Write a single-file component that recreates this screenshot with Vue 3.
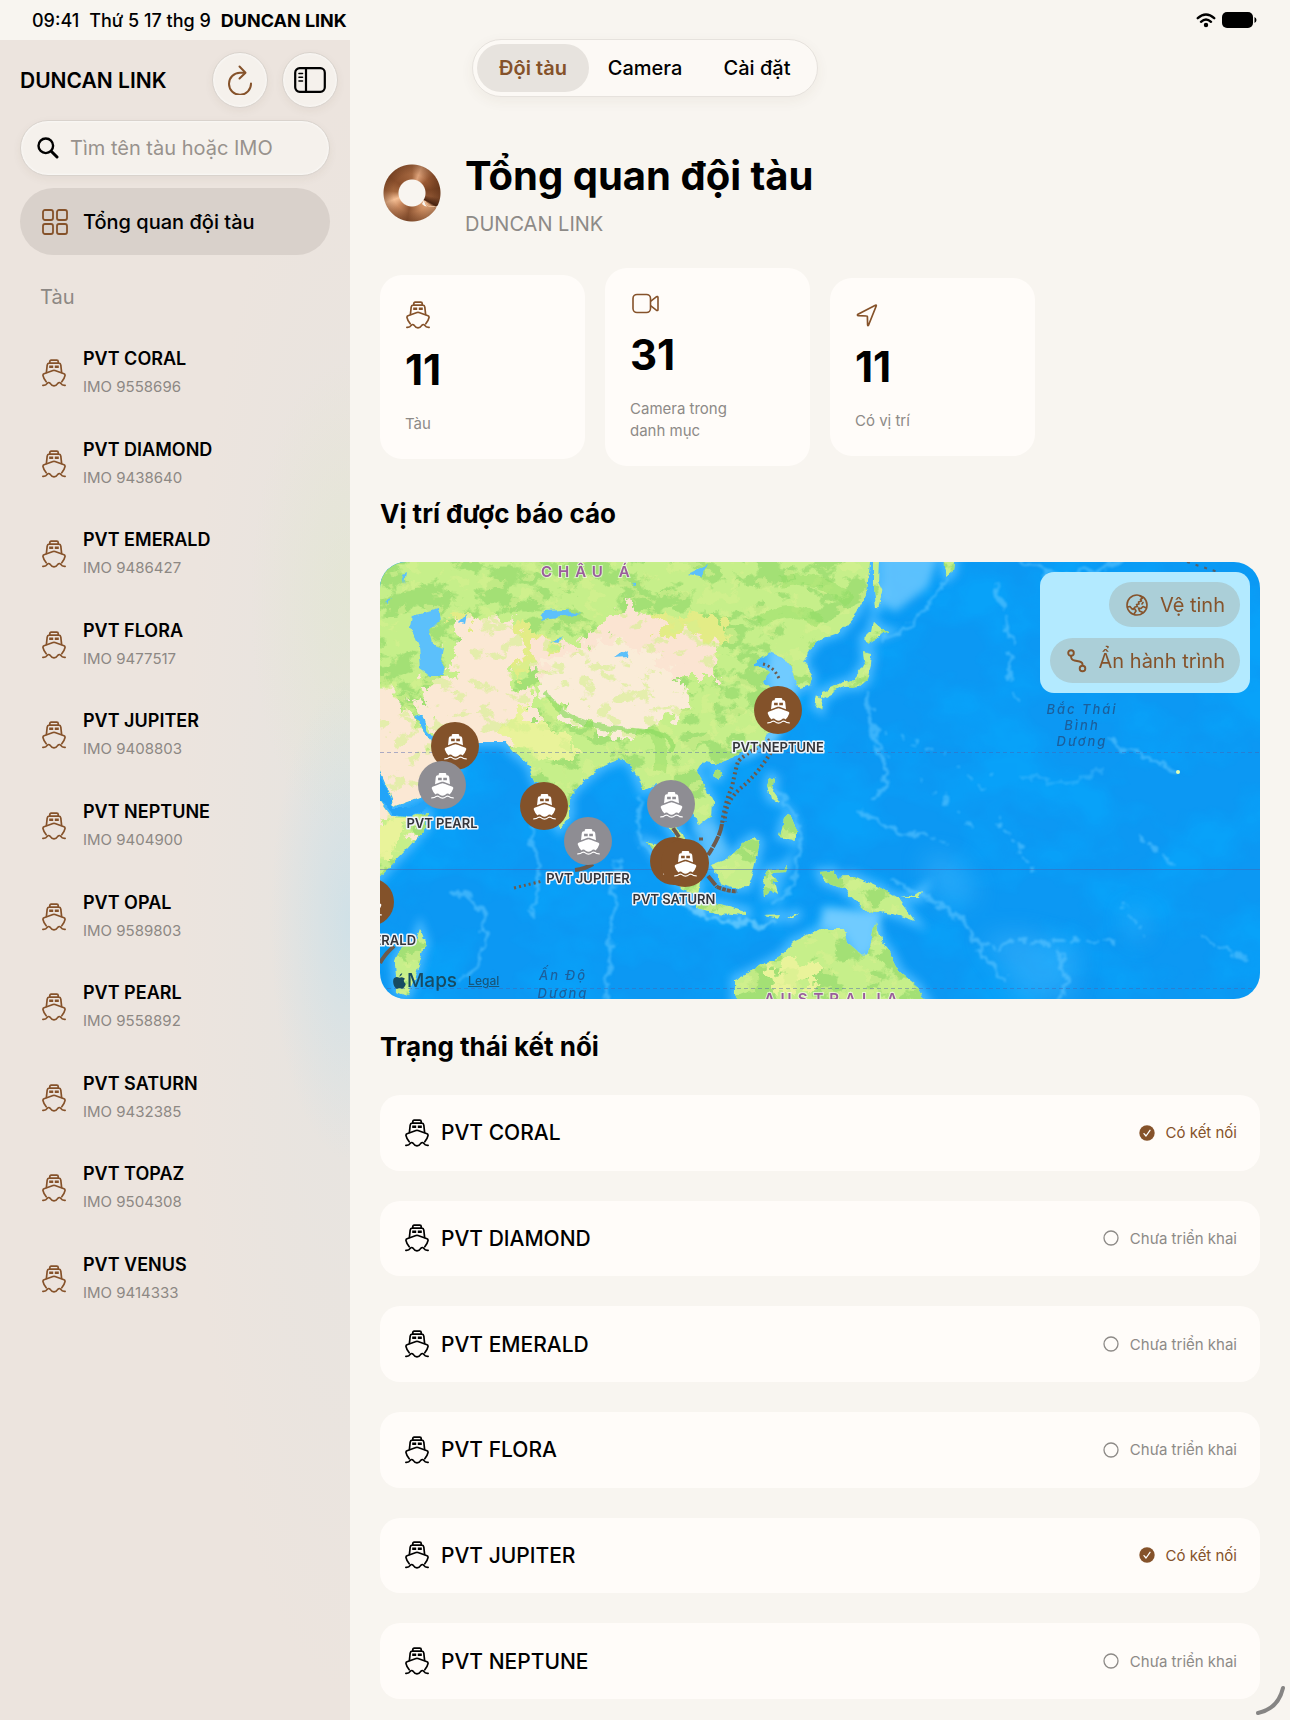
<script setup>
import { ref } from 'vue'

const ships = [
  { name: 'PVT CORAL', imo: '9558696', online: true },
  { name: 'PVT DIAMOND', imo: '9438640', online: false },
  { name: 'PVT EMERALD', imo: '9486427', online: false },
  { name: 'PVT FLORA', imo: '9477517', online: false },
  { name: 'PVT JUPITER', imo: '9408803', online: true },
  { name: 'PVT NEPTUNE', imo: '9404900', online: false },
  { name: 'PVT OPAL', imo: '9589803' },
  { name: 'PVT PEARL', imo: '9558892' },
  { name: 'PVT SATURN', imo: '9432385' },
  { name: 'PVT TOPAZ', imo: '9504308' },
  { name: 'PVT VENUS', imo: '9414333' },
]
const statusRows = ships.slice(0, 6)

const stats = [
  { icon: 'ship', value: 11, label: 'Tàu' },
  { icon: 'camera', value: 31, label: 'Camera trong danh mục' },
  { icon: 'arrow', value: 11, label: 'Có vị trí' },
]

const tabs = ['Đội tàu', 'Camera', 'Cài đặt']
const activeTab = ref('Đội tàu')
const query = ref('')

const pins = [
  { x: 398, y: 148, label: 'PVT NEPTUNE', dy: 42 },
  { x: 75, y: 184 },
  { x: 62, y: 223, grey: true, label: 'PVT PEARL', dy: 43 },
  { x: 164, y: 244 },
  { x: 208, y: 279, grey: true, label: 'PVT JUPITER', dy: 42 },
  { x: 291, y: 242, grey: true },
  { x: 294, y: 299, label: 'PVT SATURN', dy: 43 },
  { x: 305, y: 301 },
  { x: -10, y: 340, label: 'PVT EMERALD', dy: 43 },
]

// Outlines of the land masses in map units, one sub-path list per region
const coast = [
  'M-20-20H490V0L487 30L477 50L460 70L440 77L433 84L423 100L432 114L430 124L420 127L418 120L412 107L403 95L390 90L373 102L390 110L383 120L390 127L396 150L390 170L377 184L357 194L337 202L323 200L317 210L323 220L333 240L332 254L318 265L315 254L307 240L296 244L298 270L310 282L320 302L303 288L290 267L283 254L277 222L263 229L258 217L250 200L240 197L223 204L203 220L190 234L190 254L180 267L167 250L157 222L153 214L150 204L140 195L133 190L125 180L100 180L77 180L60 184L47 168L42 152L35 154L45 172L57 186L77 207L70 218L53 227L40 235L13 245L12 236L0 208L-20 190Z',
  'M-20 225L0 240L10 254L30 255L48 250L47 264L27 287L0 315L-20 335Z',
  'M40 367L45 380L37 410L27 434L17 430L15 400L20 387L35 380Z',
  'M493-20H500L498 20L503 30L498 47L495 47L493 25ZM563-20H576L573 10L567 15L564 5Z',
  'M493 59L502 67L510 70L500 74L487 82L483 77L491 69ZM484 89L492 91L491 102L487 118L480 124L463 125L447 134L442 136L442 130L460 122L472 118L480 108L485 100ZM437 134L443 137L441 148L435 144Z',
  'M390 215L395 217L393 230L400 240L390 236L387 224ZM404 258L410 252L415 264L415 280L408 276L400 274ZM337 208L342 210L338 216L333 213Z',
  'M373 275L380 280L377 294L374 306L367 325L352 326L340 322L332 303L345 298L353 292L362 283Z',
  'M267 280L280 284L300 300L320 320L318 335L303 327L283 305Z',
  'M317 340L340 342L367 349L367 353L337 351L317 346ZM385 354L400 353L398 357ZM405 357L420 350L414 356Z',
  'M384 315L388 308L403 306L407 302L405 310L392 311L398 320L393 320L396 334L390 330L386 333Z',
  'M440 310L453 309L457 315L473 314L500 326L520 338L535 359L513 351L500 349L490 352L477 340L463 327L443 319ZM520 336L534 334L543 328L540 336Z',
  'M355 460V417L380 405L400 394L413 380L430 372L440 367L463 367L467 380L483 394L490 387L495 360L502 380L510 390L520 410L537 424L550 445V460Z',
].join('')
</script>

<template>
  <div class="screen">
    <svg class="defs" aria-hidden="true">
      <symbol id="i-ship" viewBox="0 0 24 28">
        <g fill="none" stroke="currentColor" stroke-width="1.7" stroke-linecap="round" stroke-linejoin="round">
          <path d="M7.8 4V2.6Q7.8 1.2 9.2 1.2H14.8Q16.2 1.2 16.2 2.6V4" />
          <path d="M4.4 13.4L5.2 6Q5.4 4.2 7.2 4.2H16.8Q18.6 4.2 18.8 6L19.6 13.4" />
          <path d="M4.2 22.8Q1.6 19.5 1 16.6Q.8 15.3 2 14.8L11 11.5Q12 11.2 13 11.5L22 14.8Q23.2 15.3 23 16.6Q22.4 19.5 19.8 22.8" />
          <path d="M.9 26.4Q4 26.6 5.2 24.4Q6.6 22.6 8.2 24.4Q9.6 26.8 12 26.8T15.8 24.4Q17.4 22.6 18.8 24.4Q20 26.6 23.1 26.4" />
        </g>
        <path fill="currentColor" d="M7.2 6.6H11.2V9H7.2ZM12.8 6.6H16.8V9H12.8Z" />
      </symbol>
      <symbol id="i-pin" viewBox="0 0 24 28">
        <path fill="#fff" fill-rule="evenodd" d="M8 2.5Q8 1 9.4 1H14.6Q16 1 16 2.5V3.4H17Q18.8 3.4 19 5.2L19.8 12.6L13 10.2Q12 9.9 11 10.2L4.2 12.6L5 5.2Q5.2 3.4 7 3.4H8ZM7.4 6V8.4H11.2V6ZM12.8 6V8.4H16.6V6Z" />
        <path fill="#fff" d="M12 11.6Q12.6 11.6 22.4 15.2Q23.6 15.8 23.2 17Q22 20.6 19.4 23.4Q17.4 21.4 15 23.6Q12 26 9 23.6Q6.6 21.4 4.6 23.4Q2 20.6.8 17Q.4 15.8 1.6 15.2Q11.4 11.6 12 11.6Z" />
        <path fill="none" stroke="#fff" stroke-width="1.3" stroke-linecap="round" d="M.8 27Q4 27 5.4 25.4Q6.8 24.6 8.2 25.6Q12 28.6 15.8 25.6Q17.2 24.6 18.6 25.4Q20 27 23.2 27" />
      </symbol>
    </svg>

    <header class="statusbar">
      <span>09:41</span>
      <span>Thứ 5 17 thg 9</span>
      <strong>DUNCAN LINK</strong>
      <svg class="wifi" width="20" height="15" viewBox="0 0 20 15" fill="none" stroke="#000" stroke-width="2.4" stroke-linecap="round">
        <path d="M1.8 5.2Q10-2.2 18.2 5.2M5 8.8Q10 4.3 15 8.8" />
        <circle cx="10" cy="12" r="1.4" fill="#000" stroke-width="1.6" />
      </svg>
      <svg width="35" height="16" viewBox="0 0 35 16"><rect x="0" y="0" width="31" height="16" rx="5" /><path d="M32.5 5Q34.5 6 34.5 8T32.5 11Z" /></svg>
    </header>

    <div class="body">
      <aside class="sidebar">
        <div class="side-head">
          <h2>DUNCAN LINK</h2>
          <button class="round bronze" aria-label="Làm mới">
            <svg width="26" height="30" viewBox="0 0 26 30" fill="none" stroke="currentColor" stroke-width="2" stroke-linecap="round" stroke-linejoin="round">
              <path d="M17.5 7.8H13A11 11 0 1 0 24 18.5" /><path d="M12.5 1.5L18.5 7.7L12.5 13.5" />
            </svg>
          </button>
          <button class="round" aria-label="Thanh bên">
            <svg width="32" height="26" viewBox="0 0 32 26" fill="none" stroke="currentColor" stroke-width="2.2" stroke-linecap="round">
              <rect x="1.2" y="1.2" width="29.6" height="23.6" rx="4.5" /><path d="M12 1.5V24.5" /><path stroke-width="1.6" d="M5 6.5H8.5M5 10.2H8.5M5 14H8.5" />
            </svg>
          </button>
        </div>

        <label class="search">
          <svg width="22" height="22" viewBox="0 0 22 22" fill="none" stroke="#000" stroke-linecap="round"><circle cx="8.8" cy="8.8" r="7.3" stroke-width="2.4" /><path stroke-width="3" d="M14.5 14.5L20 20" /></svg>
          <input v-model="query" type="text" placeholder="Tìm tên tàu hoặc IMO" aria-label="Tìm tên tàu hoặc IMO" />
        </label>

        <button class="overview">
          <svg width="26" height="26" viewBox="0 0 26 26" fill="none" stroke="currentColor" stroke-width="1.8"><rect x="1" y="1" width="10" height="10" rx="2" /><rect x="15" y="1" width="10" height="10" rx="2" /><rect x="1" y="15" width="10" height="10" rx="2" /><rect x="15" y="15" width="10" height="10" rx="2" /></svg>
          Tổng quan đội tàu
        </button>

        <h3>Tàu</h3>
        <ul class="ships">
          <li v-for="s in ships" :key="s.imo">
            <svg class="ship bronze"><use href="#i-ship" /></svg>
            <div>
              <div class="ship-name">{{ s.name }}</div>
              <div class="ship-imo">IMO {{ s.imo }}</div>
            </div>
          </li>
        </ul>
      </aside>

      <main class="main">
        <nav class="tabs">
          <button v-for="t in tabs" :key="t" :class="{ active: t === activeTab }" @click="activeTab = t">{{ t }}</button>
        </nav>

        <div class="hero">
          <div class="logo">
            <svg width="60" height="60" viewBox="0 0 60 60">
              <path fill="none" stroke="#e9bd98" stroke-width="1" d="M43.5 38Q44 43.500 48 43.500H52Q54.500 43.500 56 46" />
              <path fill="#f8f5f0" d="M42 37Q43 42 45 43.500Q42.500 43.500 40 41ZM54 43.500L60 41V46L56 47Q55.800 44.500 54 43.500Z" />
            </svg>
          </div>
          <div>
            <h1>Tổng quan đội tàu</h1>
            <p>DUNCAN LINK</p>
          </div>
        </div>

        <section class="stats">
          <article v-for="s in stats" :key="s.label">
            <svg v-if="s.icon === 'ship'" class="stat-ship bronze"><use href="#i-ship" /></svg>
            <svg v-else-if="s.icon === 'camera'" class="bronze" width="30" height="24" viewBox="0 0 30 24" fill="none" stroke="currentColor" stroke-width="1.6" stroke-linejoin="round"><rect x="3" y="2.500" width="17.500" height="18" rx="4" /><path d="M20.500 9.300L26.300 4.800Q28 3.800 28 5.600V17.400Q28 19.200 26.300 18.200L20.500 13.700" /></svg>
            <svg v-else class="bronze" width="24" height="26" viewBox="0 0 24 26" fill="none" stroke="currentColor" stroke-width="1.7" stroke-linejoin="round"><path d="M3 12.300L20.400 3.200Q21.600 2.800 21.200 4L13.600 23Q12.800 24.300 12.600 22.800L12.400 14.600Q12.300 14 11.600 14L3.200 13.600Q1.800 13.200 3 12.300Z" /></svg>
            <div class="value">{{ s.value }}</div>
            <div class="caption">{{ s.label }}</div>
          </article>
        </section>

        <h2 class="section-title">Vị trí được báo cáo</h2>

        <div class="map">
          <svg class="canvas" viewBox="0 0 880 437" preserveAspectRatio="xMidYMid slice">
            <defs>
              <filter id="rough" x="-5%" y="-5%" width="110%" height="110%">
                <feTurbulence type="fractalNoise" baseFrequency=".09" numOctaves="3" seed="4" result="n" />
                <feDisplacementMap in="SourceGraphic" in2="n" scale="7" xChannelSelector="R" yChannelSelector="G" />
              </filter>
              <filter id="ragged" x="-10%" y="-10%" width="120%" height="120%">
                <feTurbulence type="fractalNoise" baseFrequency=".06" numOctaves="4" seed="9" result="n" />
                <feDisplacementMap in="SourceGraphic" in2="n" scale="36" xChannelSelector="R" yChannelSelector="G" />
              </filter>
              <filter id="soft" x="-20%" y="-20%" width="140%" height="140%"><feGaussianBlur stdDeviation="4" /></filter>
              <filter id="softer" x="-40%" y="-40%" width="180%" height="180%"><feGaussianBlur stdDeviation="12" /></filter>
              <filter id="reef" x="-20%" y="-20%" width="140%" height="140%">
                <feTurbulence type="fractalNoise" baseFrequency=".08" numOctaves="3" seed="2" result="n" />
                <feDisplacementMap in="SourceGraphic" in2="n" scale="18" xChannelSelector="R" yChannelSelector="G" /><feGaussianBlur stdDeviation="1.2" />
              </filter>
              <filter id="forest" x="0" y="0" width="100%" height="100%" color-interpolation-filters="sRGB">
                <feTurbulence type="fractalNoise" baseFrequency=".03 .04" numOctaves="5" seed="11" />
                <feColorMatrix values="0 0 0 0 .64  0 0 0 0 .88  0 0 0 0 .46  16 0 0 0 -8" />
              </filter>
              <filter id="meadow" x="0" y="0" width="100%" height="100%" color-interpolation-filters="sRGB">
                <feTurbulence type="fractalNoise" baseFrequency=".05 .07" numOctaves="5" seed="23" />
                <feColorMatrix values="0 0 0 0 .84  0 0 0 0 .94  0 0 0 0 .56  0 16 0 0 -9.4" />
              </filter>
              <filter id="depth" x="0" y="0" width="100%" height="100%" color-interpolation-filters="sRGB">
                <feTurbulence type="fractalNoise" baseFrequency=".012 .016" numOctaves="4" seed="7" />
                <feColorMatrix values="0 0 0 0 .02  0 0 0 0 .67  0 0 0 0 1  3 0 0 0 -1.2" />
              </filter>
              <clipPath id="land-clip"><path :d="coast" /></clipPath>
            </defs>

            <rect width="880" height="437" fill="#0c98f3" />
            <rect width="880" height="437" filter="url(#depth)" opacity=".5" />
            <path :d="coast" filter="url(#soft)" fill="#45b8ff" stroke="#45b8ff" stroke-width="9" />
            <g filter="url(#soft)" fill="#6fcbff">
              <path d="M390 85L425 95L412 150L395 180L360 200L395 160L385 110Z" />
              <path d="M443 345L500 350L496 385L480 400L462 372L440 366Z" />
              <path d="M500-10H560L548 25L515 50L500 40Z" opacity=".8" />
              <path d="M315 262L335 258L350 290L325 310Z" opacity=".8" />
            </g>
            <g filter="url(#softer)" fill="#4dbcff" opacity=".4">
              <path d="M545 290L580 300L600 335L570 345L545 320Z" /><path d="M600 375L640 370L700 385L690 437H640L620 400Z" /><path d="M745 345L765 350L765 380L750 375Z" />
            </g>
            <g fill="none" stroke="#5cc4ff" stroke-width="4" filter="url(#reef)" stroke-linecap="round" opacity=".6">
              <path d="M150 265Q160 300 158 325T150 350" /><path d="M75 330Q105 335 105 370T80 420" /><path d="M238 300Q230 370 227 437" />
              <path d="M260 240Q250 270 270 290" /><path d="M568 15Q540 60 505 78" /><path d="M615 25Q632 60 630 90T640 140" stroke-dasharray="22 14" /><path d="M640 0Q690 25 740 0" />
              <path d="M485 130Q495 180 505 200T495 235" /><path d="M480 250L520 270L545 275" /><path d="M730 180L760 192L797 208" /><path d="M640 215Q700 225 725 205" opacity=".6" />
              <path d="M510 320Q570 340 590 370T625 420" /><path d="M615 260L640 285L655 315" stroke-dasharray="3 9" /><path d="M760 275L790 300" stroke-dasharray="8 8" /><path d="M680 440Q690 410 680 390" />
              <path d="M395 230Q420 240 418 290T390 340" /><path d="M300 340Q340 365 390 362" stroke="#86d8ff" /><path d="M825 375L870 400" stroke-dasharray="12 6" /><path d="M600 385L640 380L730 380" stroke-dasharray="10 8" />
              <path d="M505 170L560 190L600 225L620 205M540 220L580 250L590 265" stroke-width="3" stroke-dasharray="2 14" /><path d="M745 345L765 375M530 270L570 280" stroke-width="3" stroke-dasharray="2 10" />
            </g>
            <circle cx="798" cy="210" r="2" fill="#e6ffb0" />

            <g filter="url(#rough)">
              <path :d="coast" fill="#c6ef8a" />
              <g clip-path="url(#land-clip)">
                <rect x="-20" y="-20" width="600" height="480" filter="url(#forest)" />
                <g filter="url(#ragged)">
                  <path fill="#e3ec86" d="M70 55L130 60L180 80L150 110L90 90ZM255 60L330 50L350 75L300 95L270 95Z" />
                  <path fill="#fbe8d4" d="M70 65L130 50L140 90L125 115L155 130L155 165L125 195L60 195L35 125L75 110Z" />
                  <path fill="#fbe8d4" d="M0 120L25 145L40 165L60 190L90 210L40 250L0 260L-30 200ZM30 275L50 270L40 290Z" />
                  <path fill="#fbe4d2" d="M150 75L200 85L250 40L275 65L335 80L340 115L290 115L260 95L200 120L165 135L155 105Z" />
                  <path fill="#faecd8" d="M165 95L240 80L295 110L310 145L265 170L240 175L190 160L160 130Z" />
                  <path fill="#e9f39a" d="M120 160L145 150L175 165L200 190L165 195L140 190ZM390 405L430 395L440 420L400 430ZM-5 260L30 260L10 290L-10 300Z" />
                </g>
                <rect x="-20" y="-20" width="600" height="480" filter="url(#meadow)" opacity=".6" />
                <path fill="none" stroke="#8fdc62" stroke-width="5" d="M165 130Q185 165 245 168T290 190" opacity=".7" />
                <path fill="none" stroke="#8fdc62" stroke-width="12" d="M270 165Q285 185 280 210M380 60Q410 40 440 60M400 20Q440 10 470 40" opacity=".45" />
              </g>
              <g fill="#5cc0fb">
                <path d="M32 54L58 47L60 57L50 67L53 84L65 87L62 102L63 114L50 114L40 107L38 84L30 65Z" />
                <path d="M160 58L165 50L185 49L200 52L185 55L168 56ZM235 96L248 87L247 95ZM308 12L328 2L322 14ZM78 60L86 52L84 62ZM5 40L12 36L8 42ZM22 12L26 10L24 22ZM172 78L182 76L178 80ZM252 21L256 19V24Z" />
                <path d="M-10 205L0 216Q12 232 12 246L30 246L60 230L66 232L30 256L12 252Q4 238-10 236Z" fill="#20a4f8" />
              </g>
            </g>

            <g fill="none" stroke="#4a5fae" opacity=".45"><path d="M0 307.500H880" /><path stroke-dasharray="4 3" d="M0 190.500H880M0 426.500H880" /></g>

            <g fill="none" stroke="#6d5a4c" stroke-width="4">
              <path stroke-dasharray="2 3" d="M390 178Q360 195 358 200T352 225Q345 240 342 262" />
              <path stroke-dasharray="2 3" d="M396 182Q380 210 362 225T345 260" />
              <path stroke-dasharray="12 1" d="M342 262Q340 275 328 293M328 314L337 325" /><path d="M337 325Q350 330 357 329" stroke-dasharray="4 1" />
              <path d="M293 266L299 275M195 308Q205 307 213 302M0 401Q5 392 14 384" />
              <path stroke-dasharray="2 3" stroke-width="3" d="M134 326Q150 322 163 319M383 102Q395 105 400 119" /><path d="M319 277H323" stroke-width="3" />
            </g>
            <path stroke="#55606a" stroke-width="2" stroke-dasharray="3 6" fill="none" d="M807 0L838 10" />

            <g class="continent"><text x="161" y="15">CHÂU Á</text><text x="384" y="442">AUSTRALIA</text></g>
            <g class="sea"><text x="183" y="418">Ấn Độ</text><text x="183" y="436">Dương</text><text x="702" y="152">Bắc Thái</text><text x="702" y="168">Bình</text><text x="702" y="184">Dương</text></g>

            <g v-for="(p, i) in pins" :key="i">
              <circle :cx="p.x" :cy="p.y" r="24" :fill="p.grey ? '#8e8d93' : '#83522a'" />
              <use href="#i-pin" :x="p.x - 11" :y="p.y - 13" width="23" height="27" />
              <text v-if="p.label" class="pin-label" :x="p.x" :y="p.y + p.dy">{{ p.label }}</text>
            </g>
          </svg>

          <div class="controls">
            <button>
              <svg width="22" height="22" viewBox="0 0 22 22" fill="none" stroke="currentColor" stroke-width="1.6" stroke-linecap="round" stroke-linejoin="round"><circle cx="11" cy="11" r="10" /><path d="M14 2L16.500 4L14.500 5.500L15.500 7L12.500 8L13 10L10.500 10.500L11.500 12.500L9 13L7 15.500M1.500 13L4 12.500L6 15L8.500 14.500L10 17L8 20M20.500 14L17 12.500L15 14.500L12.500 14L13.500 17L17 18.500M17 8.500L16 10" /></svg>
              Vệ tinh
            </button>
            <button>
              <svg width="20" height="24" viewBox="0 0 20 24" fill="none" stroke="currentColor" stroke-width="1.9"><circle cx="4" cy="4" r="2.8" /><circle cx="15.500" cy="19.500" r="2.8" /><path d="M4 7Q4 11 7.500 11.500L12.500 12.500Q16 13.300 15.500 16.500" /></svg>
              Ẩn hành trình
            </button>
          </div>

          <div class="legal">
            <svg width="13" height="16" viewBox="0 0 13 16" fill="currentColor"><path d="M9.200 0Q9.400 2.800 6.400 3.800Q6.300 1 9.200 0ZM6.500 4.700Q9.500 3.200 12 5.700Q9.200 7.800 12.800 11Q11 16 8.600 15.600Q6.500 14.700 4.600 15.600Q2 16 .5 11.200Q-1 4.600 3.600 4Q4.800 4 6.500 4.700Z" /></svg>
            <span>Maps</span>
            <a href="#">Legal</a>
          </div>
        </div>

        <h2 class="section-title">Trạng thái kết nối</h2>

        <ul class="status-list">
          <li v-for="s in statusRows" :key="s.imo">
            <svg class="ship"><use href="#i-ship" /></svg>
            <span class="row-name">{{ s.name }}</span>
            <span class="state" :class="{ bronze: s.online }">
              <svg width="16" height="16" viewBox="0 0 16 16" fill="none">
                <template v-if="s.online"><circle cx="8" cy="8" r="7.7" fill="currentColor" /><path stroke="#fff" stroke-width="1.3" stroke-linecap="round" stroke-linejoin="round" d="M5 8.600L7 11L11 5.300" /></template>
                <circle v-else cx="8" cy="8" r="7" stroke="currentColor" stroke-width="1.3" />
              </svg>
              {{ s.online ? 'Có kết nối' : 'Chưa triển khai' }}
            </span>
          </li>
        </ul>
      </main>
    </div>

    <svg class="grip" width="32" height="32" viewBox="0 0 32 32" fill="none" stroke="#868584" stroke-width="4" stroke-linecap="round"><path d="M28 3Q23 24 3 28" /></svg>
  </div>
</template>

<style>
body { margin: 0; background: #f8f5f0; }
</style>

<style scoped>
.screen {
  position: relative;
  display: flex;
  flex-direction: column;
  min-height: 100vh;
  font-family: Inter, "Liberation Sans", sans-serif;
  color: #000;
  background: #f8f5f0;
}
.screen * { box-sizing: border-box; }
h1, h2, h3, p, ul { margin: 0; padding: 0; list-style: none; }
button { border: 0; padding: 0; font: inherit; color: inherit; background: none; cursor: pointer; }
svg { flex: none; display: block; }
.defs { position: absolute; width: 0; height: 0; }
.bronze { color: #85522a; }
.ship { width: 24px; height: 28px; }

.statusbar {
  display: flex;
  align-items: center;
  height: 40px;
  padding: 0 33px 0 32px;
  gap: 10px;
  font-size: 18px;
  font-weight: 500;
}
.statusbar strong { font-weight: 700; }
.wifi { margin-left: auto; margin-right: -4px; }

.body { flex: 1; display: flex; }

.sidebar {
  flex: none;
  width: 350px;
  padding: 12px 12px 0 20px;
  background:
    radial-gradient(ellipse 80px 240px at 100% 880px, rgba(190, 222, 236, .55), transparent),
    radial-gradient(ellipse 100px 240px at 100% 560px, rgba(222, 232, 200, .45), transparent),
    radial-gradient(ellipse 170px 800px at 100% 860px, rgba(226, 228, 226, .6), transparent),
    #ece4de;
}
.side-head { display: flex; align-items: center; gap: 14px; }
.side-head h2 { flex: 1; font-size: 21px; font-weight: 600; white-space: nowrap; }
.round {
  display: flex;
  align-items: center;
  justify-content: center;
  width: 56px;
  height: 56px;
  border-radius: 50%;
  border: 1px solid #d9d3cd;
  background: #f5f1ec;
  box-shadow: 0 3px 10px rgba(90, 60, 30, .06), inset 0 0 3px #fff;
}
.search {
  display: flex;
  align-items: center;
  gap: 11px;
  height: 56px;
  margin: 12px 8px 0 0;
  padding: 0 16px;
  border-radius: 28px;
  border: 1px solid #d9d3cd;
  background: #f5f1ec;
  box-shadow: 0 3px 10px rgba(90, 60, 30, .06), inset 0 0 3px #fff;
}
.search input { flex: 1; min-width: 0; border: 0; outline: 0; padding: 0; background: none; font: 400 20px Inter, sans-serif; color: #000; }
.search input::placeholder { color: #98928d; opacity: 1; }
.overview {
  display: flex;
  align-items: center;
  gap: 15px;
  width: 310px;
  height: 67px;
  margin-top: 12px;
  padding-left: 22px;
  border-radius: 34px;
  background: #d9d1cb;
  font-size: 20px;
  font-weight: 500;
}
.overview svg { color: #85522a; }
.sidebar h3 { margin: 28px 0 17px 20px; font-size: 20px; line-height: 28px; font-weight: 400; color: #8d8884; }
.ships { display: grid; grid-template-rows: repeat(11, 1fr); height: 996px; }
.ships li { display: flex; align-items: center; gap: 17px; padding-left: 22px; }
.ship-name { font-size: 18px; line-height: 28px; font-weight: 600; }
.ship-imo { font-size: 15px; line-height: 28px; color: #8d8884; }

.main { flex: 1; min-width: 0; padding: 0 30px 19px; }
.tabs {
  display: flex;
  width: 346px;
  height: 58px;
  margin: -1px 0 0 92px;
  padding: 4px;
  border-radius: 29px;
  border: 1px solid #e6e2dd;
  background: #fcf9f5;
  box-shadow: 0 4px 14px rgba(90, 60, 30, .06);
}
.tabs button { flex: 1; border-radius: 24px; font-size: 20px; font-weight: 500; }
.tabs .active { background: #e7e3de; color: #85522a; font-weight: 600; }

.hero { display: flex; align-items: center; gap: 23px; margin-top: 51px; padding-left: 2px; }
.logo {
  width: 60px;
  height: 60px;
  background:
    radial-gradient(circle, transparent 19px, rgba(70, 32, 12, .35) 29px),
    conic-gradient(#a3663f, #dda27a 20deg, #9a5a34 50deg, #7a4424 80deg, #8a5230 100deg, #4a2410 118deg, #e2a87c 124deg, #c98a5e 150deg, #8e5533 190deg, #c9895f 225deg, #f6c096 250deg, #a5683f 275deg, #8a4f2c 305deg, #a3663f);
  mask: radial-gradient(circle, transparent 13px, #000 14px, #000 28px, transparent 29px);
}
.hero h1 { font-size: 40px; line-height: 56px; font-weight: 700; }
.hero p { font-size: 20px; line-height: 28px; margin-top: 6px; color: #8d8a87; }

.stats { display: grid; grid-template-columns: repeat(4, 1fr); gap: 20px; align-items: center; margin-top: 30px; }
.stats article { padding: 24px 25px; border-radius: 22px; background: #fffcf9; }
.stat-ship { width: 24px; height: 32px; margin-left: 1px; }
.value { margin: 15px 0 19px; font-size: 42px; line-height: 48px; font-weight: 700; }
.caption { max-width: 120px; font-size: 15px; line-height: 22px; color: #8d8a87; }

.section-title { font-size: 26px; line-height: 34px; font-weight: 700; margin: 31px 0; }

.map { position: relative; overflow: hidden; border-radius: 26px; }
.canvas { width: 100%; height: auto; }
.canvas text { font-family: Inter, "Liberation Sans", sans-serif; }
.continent text { font-size: 15px; font-weight: 600; letter-spacing: 6px; fill: #9a5c9c; stroke: rgba(255, 255, 255, .6); stroke-width: 2px; paint-order: stroke; }
.sea text { font-size: 13px; font-style: italic; font-weight: 500; letter-spacing: 2px; text-anchor: middle; fill: #1c5f9c; }
.canvas .pin-label { font-size: 13px; font-weight: 600; text-anchor: middle; fill: #33343a; stroke: #eef3f8; stroke-width: 3px; stroke-linejoin: round; paint-order: stroke; }
.controls {
  position: absolute;
  top: 10px;
  right: 10px;
  display: flex;
  flex-direction: column;
  align-items: flex-end;
  gap: 11px;
  padding: 10px;
  border-radius: 14px;
  background: #b3eaff;
}
.controls button { display: flex; align-items: center; gap: 12px; height: 45px; padding: 0 15px 0 17px; border-radius: 23px; background: #abcfd8; color: #85532b; font-size: 20px; }
.legal { position: absolute; left: 13px; bottom: 7px; display: flex; align-items: center; gap: 1px; color: #174a61; font-size: 19px; font-weight: 500; }
.legal a { margin-left: 10px; font-size: 12px; color: #17567c; }

.status-list { display: grid; grid-template-rows: repeat(6, 1fr); gap: 30px; height: 604px; }
.status-list li { display: flex; align-items: center; padding: 0 23px 0 25px; border-radius: 20px; background: #fffcf9; }
.row-name { margin-left: 12px; font-size: 21px; font-weight: 500; }
.state { display: flex; align-items: center; gap: 11px; margin-left: auto; font-size: 15px; color: #8d8a87; }
.state.bronze { color: #85522a; }
.grip { position: absolute; right: 3px; bottom: 3px; }
</style>
